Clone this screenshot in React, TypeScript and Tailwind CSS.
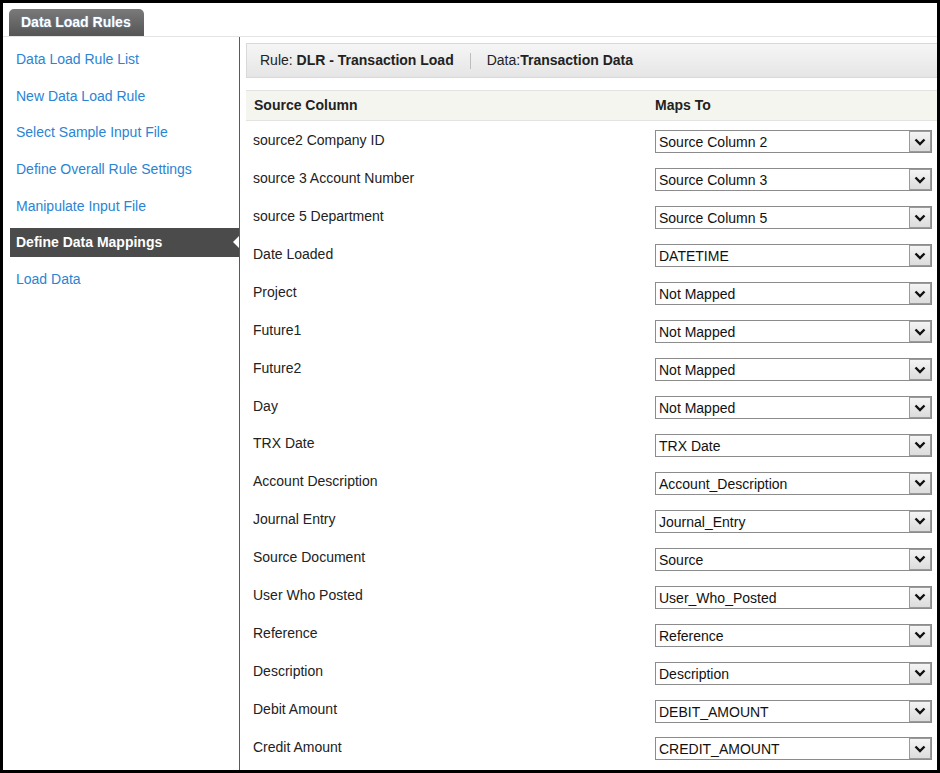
import React from 'react';

const navItems = [
  'Data Load Rule List',
  'New Data Load Rule',
  'Select Sample Input File',
  'Define Overall Rule Settings',
  'Manipulate Input File',
  'Define Data Mappings',
  'Load Data',
];

const mappings: [string, string][] = [
  ['source2 Company ID', 'Source Column 2'],
  ['source 3 Account Number', 'Source Column 3'],
  ['source 5 Department', 'Source Column 5'],
  ['Date Loaded', 'DATETIME'],
  ['Project', 'Not Mapped'],
  ['Future1', 'Not Mapped'],
  ['Future2', 'Not Mapped'],
  ['Day', 'Not Mapped'],
  ['TRX Date', 'TRX Date'],
  ['Account Description', 'Account_Description'],
  ['Journal Entry', 'Journal_Entry'],
  ['Source Document', 'Source'],
  ['User Who Posted', 'User_Who_Posted'],
  ['Reference', 'Reference'],
  ['Description', 'Description'],
  ['Debit Amount', 'DEBIT_AMOUNT'],
  ['Credit Amount', 'CREDIT_AMOUNT'],
];

const ACTIVE = 'Define Data Mappings';

function FakeSelect({ value }: { value: string }) {
  return (
    <div className="flex h-[23px] w-[277px] items-stretch border border-[#8c8c8c] bg-white">
      <div className="flex flex-1 items-center pl-[3px] pt-[2px] text-[14px] text-[#111]">{value}</div>
      <div className="flex w-[22px] items-center justify-center border border-[#9a9a9a] bg-gradient-to-b from-[#f4f4f4] to-[#dcdcdc]">
        <svg width="12" height="8" viewBox="0 0 12 8">
          <polyline points="1.5,1.5 6,6 10.5,1.5" fill="none" stroke="#111" strokeWidth="2.4" />
        </svg>
      </div>
    </div>
  );
}

export default function App() {
  return (
    <div
      className="h-[773px] w-[940px] overflow-hidden bg-black p-[3px]"
      style={{ fontFamily: '"Liberation Sans", Arial, sans-serif' }}
    >
      <div className="flex h-full w-full flex-col overflow-hidden bg-white">
        {/* tab strip */}
        <div className="flex h-[34px] shrink-0 items-end border-b border-[#e4e4e4] pl-[6px]">
          <div className="flex h-[27px] w-[135px] items-center rounded-t-[5px] bg-gradient-to-b from-[#7a7a7a] to-[#555555] pl-[12px] text-[14px] font-bold text-white [text-shadow:0_0_2px_rgba(120,170,220,0.8)]">
            Data Load Rules
          </div>
        </div>

        <div className="flex min-h-0 flex-1">
          {/* sidebar */}
          <div className="flex w-[237px] shrink-0 flex-col gap-[7.7px] border-r border-[#5a5a5a] pl-[7px] pt-[8px]">
            {navItems.map((item) =>
              item === ACTIVE ? (
                <div
                  key={item}
                  className="relative flex h-[29px] items-center bg-[#4b4b4b] pl-[6px] text-[14px] font-bold text-white"
                >
                  {item}
                  <div className="absolute right-0 top-[8px] h-0 w-0 border-y-[6px] border-r-[6px] border-y-transparent border-r-white" />
                </div>
              ) : (
                <div key={item} className="flex h-[29px] items-center pl-[6px] text-[14px] text-[#2a84d4]">
                  {item}
                </div>
              )
            )}
          </div>

          {/* main */}
          <div className="flex min-w-0 flex-1 flex-col pl-[6px] pt-[6px]">
            <div className="flex h-[35px] shrink-0 items-center border border-r-0 border-[#d9d9d9] bg-gradient-to-b from-[#f6f6f6] to-[#e5e5e5] pl-[13px] text-[14px] text-[#222]">
              <span>
                Rule: <span className="font-bold">DLR - Transaction Load</span>
              </span>
              <span className="mx-[16px] h-[16px] w-px bg-[#bdbdbd]" />
              <span>
                Data:<span className="font-bold">Transaction Data</span>
              </span>
            </div>

            <div className="mt-[12px] flex h-[31px] shrink-0 items-center border-y border-[#e3e3e3] bg-[#f5f5f0] text-[14px] font-bold text-[#222]">
              <div className="w-[409px] pl-[8px]">Source Column</div>
              <div>Maps To</div>
            </div>

            <div className="flex flex-col pt-[2px]">
              {mappings.map(([src, dst]) => (
                <div key={src} className="flex h-[37.94px] shrink-0 items-center text-[14px] text-[#222]">
                  <div className="w-[409px] pb-[3px] pl-[7px]">{src}</div>
                  <FakeSelect value={dst} />
                </div>
              ))}
            </div>
          </div>
        </div>
      </div>
    </div>
  );
}
